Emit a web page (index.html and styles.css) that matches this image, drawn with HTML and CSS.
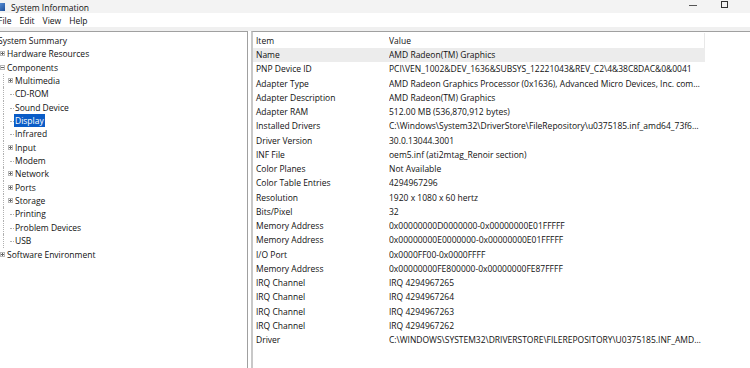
FILE: index.html
```html
<!DOCTYPE html>
<html lang="en">
<head>
    <meta charset="UTF-8">
    <title>System Information</title>
    <link rel="stylesheet" href="styles.css">
</head>
<body>
    <div class="titlebar">
        <span class="app-icon"></span>
        <span class="title">System Information</span>
        <span class="win-btn min"></span>
        <span class="win-btn max"></span>
    </div>
    <div class="menubar">
        <span>File</span>
        <span>Edit</span>
        <span>View</span>
        <span>Help</span>
    </div>
    <div class="main">
        <div class="tree">
            <div class="node root">System Summary</div>
            <div class="node l1"><span class="pm plus"></span>Hardware Resources</div>
            <div class="node l1"><span class="pm"></span>Components</div>
            <div class="node l2"><span class="pm plus"></span>Multimedia</div>
            <div class="node l2 leaf">CD-ROM</div>
            <div class="node l2 leaf">Sound Device</div>
            <div class="node l2 leaf"><span class="sel">Display</span></div>
            <div class="node l2 leaf">Infrared</div>
            <div class="node l2"><span class="pm plus"></span>Input</div>
            <div class="node l2 leaf">Modem</div>
            <div class="node l2"><span class="pm plus"></span>Network</div>
            <div class="node l2"><span class="pm plus"></span>Ports</div>
            <div class="node l2"><span class="pm plus"></span>Storage</div>
            <div class="node l2 leaf">Printing</div>
            <div class="node l2 leaf">Problem Devices</div>
            <div class="node l2 leaf last">USB</div>
            <div class="node l1"><span class="pm plus"></span>Software Environment</div>
        </div>
        <div class="splitter"></div>
        <div class="details">
            <div class="list">
                <div class="row head"><span class="item">Item</span><span class="value">Value</span></div>
                <div class="row hot"><span class="item">Name</span><span class="value">AMD Radeon(TM) Graphics</span></div>
                <div class="row"><span class="item">PNP Device ID</span><span class="value">PCI\VEN_1002&amp;DEV_1636&amp;SUBSYS_12221043&amp;REV_C2\4&amp;38C8DAC&amp;0&amp;0041</span></div>
                <div class="row"><span class="item">Adapter Type</span><span class="value">AMD Radeon Graphics Processor (0x1636), Advanced Micro Devices, Inc. compatible</span></div>
                <div class="row"><span class="item">Adapter Description</span><span class="value">AMD Radeon(TM) Graphics</span></div>
                <div class="row"><span class="item">Adapter RAM</span><span class="value">512.00 MB (536,870,912 bytes)</span></div>
                <div class="row"><span class="item">Installed Drivers</span><span class="value">C:\Windows\System32\DriverStore\FileRepository\u0375185.inf_amd64_73f65d4a</span></div>
                <div class="row"><span class="item">Driver Version</span><span class="value">30.0.13044.3001</span></div>
                <div class="row"><span class="item">INF File</span><span class="value">oem5.inf (ati2mtag_Renoir section)</span></div>
                <div class="row"><span class="item">Color Planes</span><span class="value">Not Available</span></div>
                <div class="row"><span class="item">Color Table Entries</span><span class="value">4294967296</span></div>
                <div class="row"><span class="item">Resolution</span><span class="value">1920 x 1080 x 60 hertz</span></div>
                <div class="row"><span class="item">Bits/Pixel</span><span class="value">32</span></div>
                <div class="row"><span class="item">Memory Address</span><span class="value">0x00000000D0000000-0x00000000E01FFFFF</span></div>
                <div class="row"><span class="item">Memory Address</span><span class="value">0x00000000E0000000-0x00000000E01FFFFF</span></div>
                <div class="row"><span class="item">I/O Port</span><span class="value">0x0000FF00-0x0000FFFF</span></div>
                <div class="row"><span class="item">Memory Address</span><span class="value">0x00000000FE800000-0x00000000FE87FFFF</span></div>
                <div class="row"><span class="item">IRQ Channel</span><span class="value">IRQ 4294967265</span></div>
                <div class="row"><span class="item">IRQ Channel</span><span class="value">IRQ 4294967264</span></div>
                <div class="row"><span class="item">IRQ Channel</span><span class="value">IRQ 4294967263</span></div>
                <div class="row"><span class="item">IRQ Channel</span><span class="value">IRQ 4294967262</span></div>
                <div class="row"><span class="item">Driver</span><span class="value">C:\WINDOWS\SYSTEM32\DRIVERSTORE\FILEREPOSITORY\U0375185.INF_AMD64_73F65D4A</span></div>
            </div>
        </div>
    </div>
</body>
</html>
```

FILE: styles.css
```css
* {
    box-sizing: border-box;
}

html, body {
    margin: 0;
    padding: 0;
    width: 750px;
    height: 368px;
    overflow: hidden;
    background: #ffffff;
    font-family: "Open Sans", "Noto Sans", sans-serif;
    font-size: 8.5px;
    color: #111111;
}

.titlebar {
    height: 13px;
    background: #f3f3f3;
    display: flex;
    align-items: center;
    position: relative;
}

.app-icon {
    width: 6px;
    height: 8px;
    margin-left: -1px;
    background: linear-gradient(135deg, #5a8fd6, #1d4f9a);
}

.title {
    margin-left: 6px;
    margin-top: 1px;
}

.win-btn {
    position: absolute;
}

.win-btn.min {
    left: 689px;
    top: 5px;
    width: 8px;
    height: 1px;
    background: #555;
}

.win-btn.max {
    left: 721px;
    top: 1px;
    width: 7px;
    height: 7px;
    border: 1px solid #333;
}

.menubar {
    height: 18px;
    background: #ffffff;
    display: flex;
    align-items: center;
    gap: 8px;
    margin-left: -2px;
    border-bottom: 4px solid #f0f0f0;
}

.main {
    display: flex;
    height: 337px;
}

.tree {
    width: 248px;
    border-top: 1px solid #a0a0a0;
    border-right: 1px solid #a0a0a0;
    padding-top: 2px;
}

.node {
    height: 13.35px;
    line-height: 13.35px;
    white-space: nowrap;
    position: relative;
}

.node.root {
    margin-left: -2px;
}

.node.l1 {
    padding-left: 7px;
}

.node.l2 {
    padding-left: 15px;
}

.node.l2::before {
    content: "";
    position: absolute;
    left: 3px;
    top: 0;
    bottom: 0;
    border-left: 1px dotted #b0b0b0;
}

.node.leaf::after {
    content: "";
    position: absolute;
    left: 10px;
    width: 4px;
    top: 7px;
    border-top: 1px dotted #b0b0b0;
}

.pm {
    position: absolute;
    width: 5px;
    height: 5px;
    top: 4px;
    border: 1px solid #b8b8b8;
    background: #fff;
}

.node.l1 .pm {
    left: 0;
}

.node.l2 .pm {
    left: 8px;
}

.pm::before {
    content: "";
    position: absolute;
    left: 0;
    top: 1px;
    width: 3px;
    border-top: 1px solid #666;
}

.pm.plus::after {
    content: "";
    position: absolute;
    left: 1px;
    top: 0;
    height: 3px;
    border-left: 1px solid #666;
}

.sel {
    background: #0a5cc7;
    color: #ffffff;
    padding: 0 1px;
    margin-left: -1px;
    display: inline-block;
    line-height: 13px;
}

.splitter {
    width: 3px;
    background: #ffffff;
}

.details {
    flex: 1;
    border-top: 1px solid #a0a0a0;
    border-left: 2px solid #c8c8c8;
    padding-top: 1px;
}

.list {
    width: 452px;
}

.row {
    display: flex;
    height: 14.25px;
    line-height: 14.25px;
    white-space: nowrap;
}

.row.head {
    height: 15px;
    line-height: 15px;
    border-right: 1px solid #e8e8e8;
}

.row.hot {
    background: #ececec;
}

.item {
    width: 136px;
    padding-left: 3px;
    flex: none;
}

.value {
    flex: 1;
    overflow: hidden;
    text-overflow: ellipsis;
    padding-right: 2px;
}
```
